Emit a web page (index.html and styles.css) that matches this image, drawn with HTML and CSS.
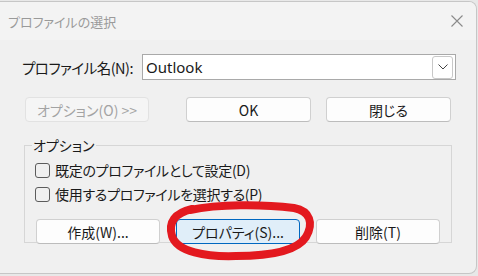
FILE: index.html
```html
<!DOCTYPE html>
<html lang="ja">
<head>
    <meta charset="UTF-8">
    <title>プロファイルの選択</title>
    <link rel="stylesheet" href="styles.css">
</head>
<body>
    <div id="fenetre">
        <div id="titre">
            <span class="titre-texte">プロファイルの選択</span>
            <svg class="fermer" width="12" height="12" viewBox="0 0 12 12">
                <path d="M0.5 0.5 L11.5 11.5 M11.5 0.5 L0.5 11.5" stroke="#8a8a8a" stroke-width="1.1" fill="none"/>
            </svg>
        </div>

        <div id="contenu">
            <div class="ligne-profil">
                <span class="libelle">プロファイル名(N):</span>
                <div class="combo">
                    <span class="combo-valeur">Outlook</span>
                    <span class="combo-fleche">
                        <svg width="10" height="6" viewBox="0 0 10 6">
                            <path d="M0.5 0.5 L5 5 L9.5 0.5" stroke="#444" stroke-width="1" fill="none"/>
                        </svg>
                    </span>
                </div>
            </div>

            <div class="ligne-boutons">
                <button class="btn desactive">オプション(O) &gt;&gt;</button>
                <button class="btn">OK</button>
                <button class="btn">閉じる</button>
            </div>

            <fieldset class="groupe">
                <legend>オプション</legend>
                <label class="case"><span class="coche"></span>既定のプロファイルとして設定(D)</label>
                <label class="case"><span class="coche"></span>使用するプロファイルを選択する(P)</label>
                <div class="ligne-actions">
                    <button class="btn">作成(W)...</button>
                    <button class="btn actif">プロパティ(S)...</button>
                    <button class="btn">削除(T)</button>
                </div>
            </fieldset>
        </div>

        <!-- cercle rouge dessine a la main -->
        <svg class="cercle" width="478" height="276" viewBox="0 0 478 276">
            <path d="M190 209 C218 203 262 203 294 207 C310 210 314 222 306 236 C297 250 270 255 236 255 C206 256 177 251 172 235 C168 221 175 212 192 208"
                  stroke="#e3191f" stroke-width="8" fill="none" stroke-linecap="round"/>
        </svg>
    </div>
</body>
</html>
```

FILE: styles.css
```css
body{
    margin: 0;
    background: #e8e8e8;
    font-family: "Noto Sans CJK JP", "Noto Sans", sans-serif;
    font-feature-settings: "palt";
    color: #1a1a1a;
}

#fenetre{
    position: relative;
    width: 476px;
    height: 271px;
    margin-top: 1px;
    background: #f0f0f0;
    border: 1px solid #c6c6c6;
    border-left: none;
    border-radius: 0 8px 8px 0;
    overflow: hidden;
}

#titre{
    height: 38px;
    display: flex;
    align-items: center;
    justify-content: space-between;
    padding: 0 13px 0 8px;
    background: #f3f3f3;
}

.titre-texte{
    font-size: 13px;
    color: #9a9a9a;
}

#contenu{
    padding: 14px 0 0 22px;
}

.ligne-profil{
    display: flex;
    align-items: center;
}

.libelle{
    width: 120px;
    font-size: 14.5px;
    letter-spacing: -0.5px;
}

.combo{
    width: 307px;
    height: 24px;
    display: flex;
    align-items: center;
    justify-content: space-between;
    background: #fff;
    border: 1px solid #a9a9a9;
    padding: 0 2px 0 3px;
    box-sizing: content-box;
}

.combo-valeur{
    font-family: "Noto Sans", sans-serif;
    font-size: 15px;
}

.combo-fleche{
    width: 19px;
    height: 21px;
    display: flex;
    align-items: center;
    justify-content: center;
    border: 1px solid #c8c8c8;
    border-radius: 3px;
}

.ligne-boutons{
    display: flex;
    gap: 15px;
    margin-top: 17px;
    padding-left: 3px;
}

.btn{
    width: 125px;
    height: 25px;
    padding: 0;
    background: #fdfdfd;
    border: 1px solid #d0d0d0;
    border-bottom-color: #bcbcbc;
    border-radius: 4px;
    font-family: inherit;
    font-feature-settings: "palt";
    font-size: 14px;
    color: #1a1a1a;
}

.ligne-boutons .btn:first-child{
    width: 124px;
    margin-right: 22px;
}

.desactive{
    background: #f5f5f5;
    border-color: #e2e2e2;
    color: #a3a3a3;
}

.groupe{
    width: 428px;
    height: 108px;
    margin: 13px 0 0 2px;
    padding: 3px 0 0 10px;
    border: 1px solid #d6d6d6;
    box-sizing: border-box;
}

.groupe legend{
    padding: 0 1px;
    margin-left: -3px;
    font-size: 14px;
}

.case{
    display: flex;
    align-items: center;
    gap: 5px;
    height: 24px;
    font-size: 14px;
    letter-spacing: -0.3px;
}

.coche{
    width: 13px;
    height: 13px;
    border: 1px solid #5c5c5c;
    border-radius: 3px;
}

.ligne-actions{
    display: flex;
    gap: 16px;
    margin-top: 13px;
    padding-left: 1px;
}

.ligne-actions .btn{
    width: 124px;
}

.actif{
    background: #e0eef9;
    border: 1px solid #0067c0;
}

.cercle{
    position: absolute;
    left: 0;
    top: -1px;
}
```
